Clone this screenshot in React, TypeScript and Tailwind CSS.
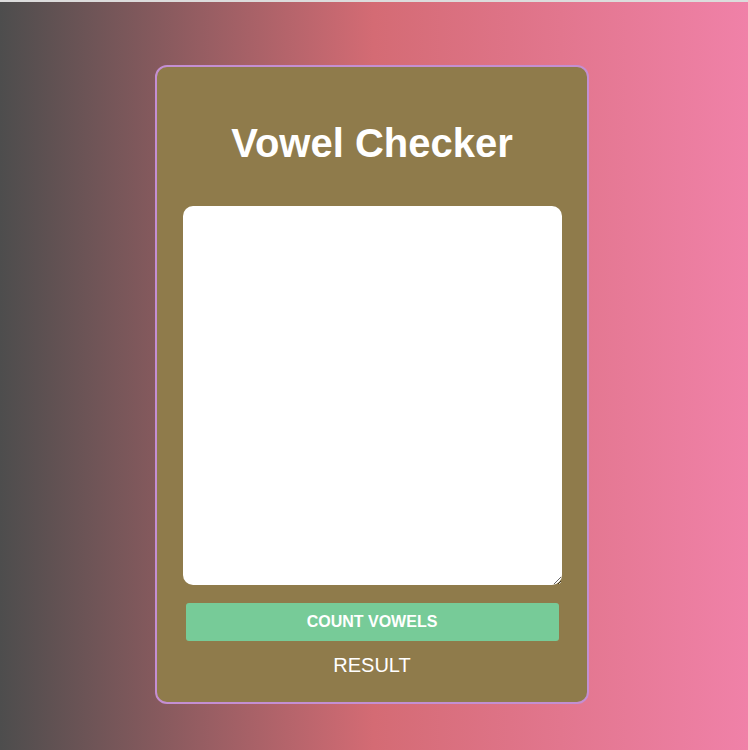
export default function App() {
  return (
    <div
      className="min-h-[750px] w-full border-t-2 border-[#dcdcdc] bg-[linear-gradient(to_right,#4d4d4d_0%,#d46b74_50%,#f081a8_100%)] pt-[63px]"
      style={{ fontFamily: '"Liberation Sans", Arial, sans-serif' }}
    >
      <div className="ml-[155px] flex h-[639px] w-[434px] flex-col items-center rounded-[12px] border-2 border-[#c48fd2] bg-[#8f7b4b] px-[26px]">
        <h1 className="mt-[54px] text-[40px] font-bold leading-[44px] text-white">Vowel Checker</h1>
        <textarea className="mt-[41px] h-[379px] w-[379px] shrink-0 rounded-[10px] bg-white outline-none" />
        <button className="mt-[18px] h-[38px] w-[373px] rounded-[3px] bg-[#77cb98] text-[16px] font-bold text-white">
          COUNT VOWELS
        </button>
        <div className="mt-[12px] text-[20px] leading-[24px] text-white">RESULT</div>
      </div>
    </div>
  );
}
